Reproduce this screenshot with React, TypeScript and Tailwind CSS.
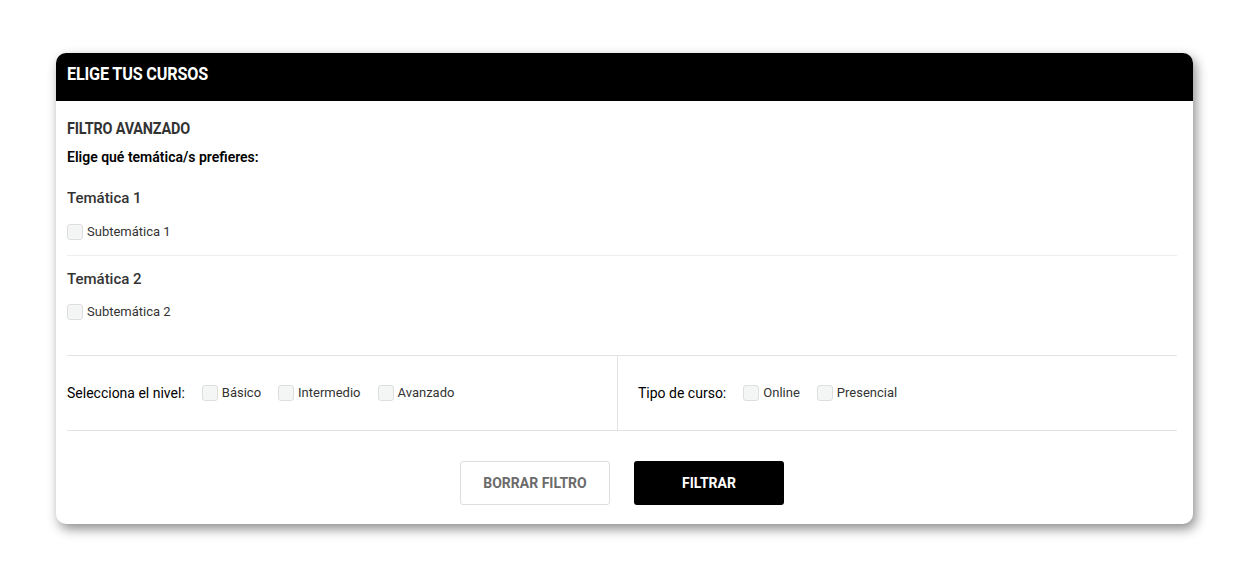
function Box() {
  return <span className="inline-block w-4 h-4 rounded-[3px] border border-[#dedede] bg-[#f4f5f5] shrink-0" />;
}

function Check({ label }: { label: string }) {
  return (
    <label className="flex items-center gap-[4px] text-[13px] text-[#333] leading-4">
      <Box />
      <span>{label}</span>
    </label>
  );
}

export default function App() {
  return (
    <div className="w-[1247px] h-[569px] bg-white pt-[53px] pl-[56px]" style={{ fontFamily: "Roboto, 'Noto Sans', sans-serif" }}>
      <div className="w-[1137px] h-[471px] rounded-[10px] bg-white shadow-[3px_5px_12px_rgba(0,0,0,0.45)] overflow-hidden">
        <div className="h-12 bg-black flex items-center pl-[11px] pb-[8px]">
          <h1 className="text-white font-bold text-[18px] tracking-[-0.2px] scale-x-[0.9] origin-left">ELIGE TUS CURSOS</h1>
        </div>
        <div className="pl-[11px] pr-[16px]">
          <h2 className="mt-[18px] text-[#333] font-bold text-[16px] tracking-[-0.2px] scale-x-[0.9] origin-left leading-5">FILTRO AVANZADO</h2>
          <p className="mt-[10px] text-[14px] font-semibold text-black leading-4">Elige qué temática/s prefieres:</p>

          <div className="pt-[23px] pb-[15px] border-b border-[#eee]">
            <h3 className="text-[15px] font-medium text-[#333] leading-5">Temática 1</h3>
            <div className="mt-[16px]"><Check label="Subtemática 1" /></div>
          </div>
          <div className="pt-[13px] pb-[35px] border-b border-[#e3e3e3]">
            <h3 className="text-[15px] font-medium text-[#333] leading-5">Temática 2</h3>
            <div className="mt-[15px]"><Check label="Subtemática 2" /></div>
          </div>

          <div className="grid grid-cols-[551px_1fr] h-[75px] border-b border-[#e3e3e3]">
            <div className="flex items-center border-r border-[#e3e3e3]">
              <span className="text-[14px] text-black mr-[17px]">Selecciona el nivel:</span>
              <div className="flex items-center gap-[17px]">
                <Check label="Básico" />
                <Check label="Intermedio" />
                <Check label="Avanzado" />
              </div>
            </div>
            <div className="flex items-center pl-[20px]">
              <span className="text-[14px] text-black mr-[17px]">Tipo de curso:</span>
              <div className="flex items-center gap-[17px]">
                <Check label="Online" />
                <Check label="Presencial" />
              </div>
            </div>
          </div>

          <div className="flex justify-center gap-6 mt-[30px]">
            <button className="w-[150px] h-[44px] rounded-[3px] border border-[#ddd] bg-white text-[#6b6b6b] font-bold text-[14px]">BORRAR FILTRO</button>
            <button className="w-[150px] h-[44px] rounded-[3px] bg-black text-white font-bold text-[14px]">FILTRAR</button>
          </div>
        </div>
      </div>
    </div>
  );
}
